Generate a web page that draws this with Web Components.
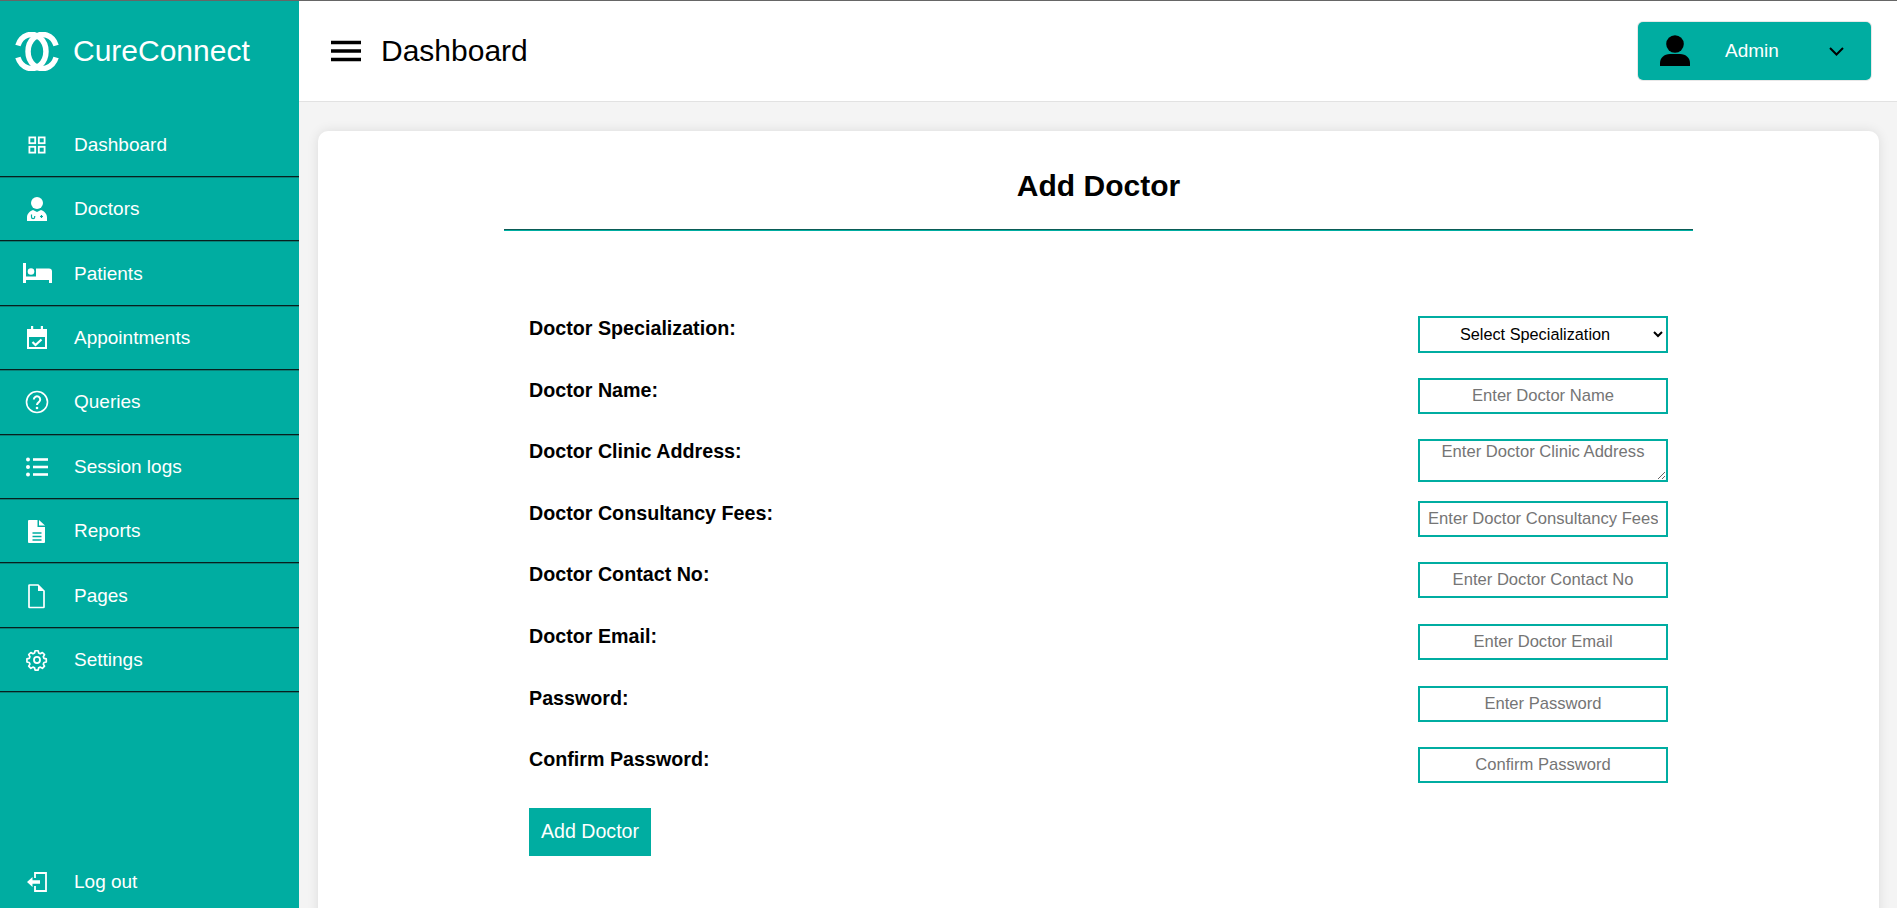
<!DOCTYPE html>
<html>
<head>
<meta charset="utf-8">
<title>CureConnect</title>
<style>
  html, body { margin: 0; height: 100%; }
  body { font-family: "Liberation Sans", Arial, sans-serif; background: #f4f4f4; overflow: hidden; }
</style>
</head>
<body>
<cc-app>
  <cc-sidebar slot="sidebar">
    <cc-nav-item label="Dashboard" icon="grid"></cc-nav-item>
    <cc-nav-item label="Doctors" icon="doctor"></cc-nav-item>
    <cc-nav-item label="Patients" icon="bed"></cc-nav-item>
    <cc-nav-item label="Appointments" icon="calendar"></cc-nav-item>
    <cc-nav-item label="Queries" icon="help"></cc-nav-item>
    <cc-nav-item label="Session logs" icon="list"></cc-nav-item>
    <cc-nav-item label="Reports" icon="report"></cc-nav-item>
    <cc-nav-item label="Pages" icon="page"></cc-nav-item>
    <cc-nav-item label="Settings" icon="gear"></cc-nav-item>
    <cc-nav-item slot="bottom" label="Log out" icon="logout" plain></cc-nav-item>
  </cc-sidebar>
  <cc-topbar slot="topbar" heading="Dashboard" user="Admin"></cc-topbar>
  <cc-card heading="Add Doctor">
    <cc-field label="Doctor Specialization:" kind="select" text="Select Specialization"></cc-field>
    <cc-field label="Doctor Name:" text="Enter Doctor Name"></cc-field>
    <cc-field label="Doctor Clinic Address:" kind="textarea" text="Enter Doctor Clinic Address"></cc-field>
    <cc-field label="Doctor Consultancy Fees:" text="Enter Doctor Consultancy Fees"></cc-field>
    <cc-field label="Doctor Contact No:" text="Enter Doctor Contact No"></cc-field>
    <cc-field label="Doctor Email:" text="Enter Doctor Email"></cc-field>
    <cc-field label="Password:" text="Enter Password"></cc-field>
    <cc-field label="Confirm Password:" text="Confirm Password"></cc-field>
    <button slot="action" style="display:block;width:122px;height:48px;margin:0;padding:0;border:0;background:#00ada1;color:#fff;font:19.6px 'Liberation Sans',Arial,sans-serif">Add Doctor</button>
  </cc-card>
</cc-app>

<script>
const ICONS = {
  grid: '<g fill="none" stroke="currentColor" stroke-width="1.800"><rect x="4.400" y="4.400" width="5.800" height="5.800"/><rect x="13.800" y="4.400" width="5.800" height="5.800"/><rect x="4.400" y="13.800" width="5.800" height="5.800"/><rect x="13.800" y="13.800" width="5.800" height="5.800"/></g>',
  doctor: '<circle cx="12" cy="6" r="6" fill="currentColor"/><path d="M2 24v-3.500c0-4 3-6.500 6-7.500l4 2 4-2c3 1 6 3.500 6 7.500V24z" fill="currentColor"/><path d="M6.500 17.500v2.500a1.600 1.600 0 0 0 3.200 0v-1M16.500 18v3M15 19.500h3" fill="none" stroke="#00ada1" stroke-width="1.200"/>',
  bed: '<path d="M-2 1h3v13.500h10V6.500h13a3 3 0 0 1 3 3V21h-3v-3H1v3h-3z" fill="currentColor"/><circle cx="6" cy="9.500" r="3.300" fill="currentColor"/>',
  calendar: '<path d="M6 0h2.200v3h7.600V0H18v3h4v20H2V3h4z M4 11v10h16V11z" fill="currentColor" fill-rule="evenodd"/><path d="M7.500 16l3 3 6-5.500" fill="none" stroke="currentColor" stroke-width="2.200"/>',
  help: '<circle cx="12" cy="12" r="10.500" fill="none" stroke="currentColor" stroke-width="1.600"/><path d="M8.800 9.500a3.200 3.200 0 1 1 5 2.700c-1.200.8-1.800 1.400-1.800 2.800" fill="none" stroke="currentColor" stroke-width="2"/><circle cx="12" cy="18" r="1.300" fill="currentColor"/>',
  list: '<g fill="currentColor"><circle cx="3" cy="4.500" r="2"/><circle cx="3" cy="12" r="2"/><circle cx="3" cy="19.500" r="2"/><rect x="8" y="3.200" width="15" height="2.600"/><rect x="8" y="10.700" width="15" height="2.600"/><rect x="8" y="18.200" width="15" height="2.600"/></g>',
  report: '<path d="M4 1h8.500v7H20v15a1 1 0 0 1-1 1H4a1 1 0 0 1-1-1V2a1 1 0 0 1 1-1z M14 1l6 5.500h-6z" fill="currentColor"/><path d="M8 14h9M8 17.500h9M8 21h9" stroke="#00ada1" stroke-width="1.300" transform="translate(-.5 0)"/>',
  page: '<path d="M4.500 1h8.500l6 6v16a.5.5 0 0 1-.5.5H4.500a.5.5 0 0 1-.5-.5V1.500a.5.5 0 0 1 .5-.5z" fill="none" stroke="currentColor" stroke-width="1.700"/><path d="M13 1l6 6h-6z" fill="currentColor"/>',
  gear: '<g transform="translate(2.400 2.400) scale(.8)"><path d="M10 1.500h4l.7 3 2.100.9 2.700-1.600 2.800 2.800-1.600 2.700.9 2.100 3 .7v4l-3 .7-.9 2.100 1.600 2.700-2.800 2.800-2.700-1.600-2.100.9-.7 3h-4l-.7-3-2.100-.9-2.700 1.600-2.800-2.800 1.600-2.700-.9-2.100-3-.7v-4l3-.7.9-2.100-1.600-2.700 2.800-2.800 2.700 1.600 2.100-.9z" transform="translate(0 -1) scale(.96)" fill="none" stroke="currentColor" stroke-width="2.200" stroke-linejoin="round"/><circle cx="12" cy="12" r="3.800" fill="none" stroke="currentColor" stroke-width="2.200"/></g>',
  logout: '<path d="M10 8V3h11v18H10v-5" fill="none" stroke="currentColor" stroke-width="1.800"/><path d="M2 12l5.500-5v3.200H15v3.600H7.500V17z" fill="currentColor"/>'
}

class CcApp extends HTMLElement {
  constructor() {
    super()
    this.attachShadow({ mode: 'open' })
    this.shadowRoot.innerHTML = `
      <style>
        :host { display: grid; grid-template-columns: 299px 1fr; grid-template-rows: 101px 1fr; height: 908px; border-top: 1px solid #666; box-sizing: border-box; }
        .side { grid-row: 1 / 3; display: flex; min-height: 0; }
        main { padding: 29px 18px 0 19px; min-height: 0; overflow: hidden; }
      </style>
      <div class="side"><slot name="sidebar"></slot></div>
      <slot name="topbar"></slot>
      <main><slot></slot></main>
    `
  }
}

class CcSidebar extends HTMLElement {
  constructor() {
    super()
    this.attachShadow({ mode: 'open' })
    this.shadowRoot.innerHTML = `
      <style>
        :host { display: flex; flex-direction: column; width: 299px; background: #00ada1; color: #fff; }
        .brand { display: flex; align-items: center; gap: 14px; height: 100px; padding-left: 15px; font-size: 30px; }
        .brand svg { width: 44px; height: 39px; flex: none; }
        nav { display: flex; flex-direction: column; padding-top: 12.600px; }
        .bottom { margin-top: auto; }
      </style>
      <div class="brand">
        <svg viewBox="0 0 44 39" fill="none" stroke="#fff" stroke-width="5.500">
          <path d="M2.900 13.500A14.500 17 0 1 1 2.900 25.500"/>
          <path d="M41.100 13.500A14.500 17 0 1 0 41.100 25.500"/>
        </svg>
        <span>CureConnect</span>
      </div>
      <nav><slot></slot></nav>
      <div class="bottom"><slot name="bottom"></slot></div>
    `
  }
}

class CcNavItem extends HTMLElement {
  constructor() {
    super()
    this.attachShadow({ mode: 'open' })
    const plain = this.hasAttribute('plain')
    this.shadowRoot.innerHTML = `
      <style>
        :host { display: block; }
        a { display: flex; align-items: center; height: ${plain ? 52 : 62.400}px; color: #fff; font-size: 19px; ${plain ? '' : 'border-bottom: 1px solid #0b7f76; box-shadow: inset 0 -1px #06201f; padding-bottom: 1px;'} }
        span.ic { width: 74px; display: flex; justify-content: center; flex: none; }
        svg { width: 24px; height: 24px; overflow: visible; }
      </style>
      <a><span class="ic"><svg viewBox="0 0 24 24">${ICONS[this.getAttribute('icon')]}</svg></span><span>${this.getAttribute('label')}</span></a>
    `
  }
}

class CcTopbar extends HTMLElement {
  constructor() {
    super()
    this.attachShadow({ mode: 'open' })
    this.shadowRoot.innerHTML = `
      <style>
        :host { display: flex; align-items: center; background: #fff; border-bottom: 1px solid #e2e2e2; box-sizing: border-box; padding: 0 26px 0 32px; color: #000; }
        .burger { width: 30px; height: 22px; flex: none; margin-right: 20px; }
        h1 { margin: 0; font-size: 30px; font-weight: 400; }
        .user { margin-left: auto; width: 233px; height: 58px; box-sizing: border-box; background: #00ada1; border-radius: 5px; box-shadow: 0 0 0 1px #e8e8e8; display: flex; align-items: center; padding: 0 27px 0 21px; color: #fff; font-size: 19px; }
        .user span { margin-left: 34px; }
        .user svg.p { width: 32px; height: 32px; }
        .user svg.c { width: 15px; height: 9px; margin-left: auto; }
      </style>
      <svg class="burger" viewBox="0 0 30 22"><path d="M0 2.500h30M0 11h30M0 19.500h30" stroke="#000" stroke-width="3.400"/></svg>
      <h1>${this.getAttribute('heading')}</h1>
      <div class="user">
        <svg class="p" viewBox="0 0 32 32"><circle cx="16" cy="9" r="8.800"/><path d="M1 31v-3c0-5 4-9 10-9h10c6 0 10 4 10 9v3z"/></svg>
        <span>${this.getAttribute('user')}</span>
        <svg class="c" viewBox="0 0 15 9"><path d="M1 1l6.500 6.500L14 1" fill="none" stroke="#000" stroke-width="2"/></svg>
      </div>
    `
  }
}

class CcCard extends HTMLElement {
  constructor() {
    super()
    this.attachShadow({ mode: 'open' })
    this.shadowRoot.innerHTML = `
      <style>
        :host { display: block; height: 900px; background: #fff; border-radius: 10px; box-shadow: 0 0 12px rgba(0,0,0,.1); box-sizing: border-box; padding: 0 186px; color: #000; }
        h2 { margin: 0; height: 100px; box-sizing: border-box; padding-top: 35px; line-height: 40px; text-align: center; font-size: 30px; font-weight: 700; border-bottom: 1px solid #00ada1; box-shadow: inset 0 -1px #0a5c56; }
        .rows { padding: 85px 25px 0; display: flex; flex-direction: column; }
        .act { padding: 0 25px; margin-top: -1px; }
      </style>
      <h2>${this.getAttribute('heading')}</h2>
      <div class="rows"><slot></slot></div>
      <div class="act"><slot name="action"></slot></div>
    `
  }
}

class CcField extends HTMLElement {
  constructor() {
    super()
    this.attachShadow({ mode: 'open' })
    const kind = this.getAttribute('kind')
    const text = this.getAttribute('text')
    let control = `<input type="text" placeholder="${text}">`
    if (kind === 'select') control = `<select><option>${text}</option></select>`
    if (kind === 'textarea') control = `<textarea placeholder="${text}"></textarea>`
    this.shadowRoot.innerHTML = `
      <style>
        :host { display: flex; justify-content: space-between; align-items: flex-start; height: 61.600px; }
        label { font-size: 19.700px; font-weight: 700; line-height: 21px; padding-top: 2px; }
        input, select, textarea { width: 250px; height: 36px; box-sizing: border-box; margin: 0; border: 2px solid #00ada1; border-radius: 0; background: #fff; text-align: center; font: 16.600px "Liberation Sans", Arial, sans-serif; color: #000; padding: 0 8px; outline: 0; display: block; }
        select { height: 37px; font-size: 16.300px; padding: 0 12px 2px 8px; }
        textarea { height: 43px; padding: 1px 8px 0; }
        ::placeholder { color: #757575; opacity: 1; }
      </style>
      <label>${this.getAttribute('label')}</label>
      ${control}
    `
  }
}

customElements.define('cc-app', CcApp)
customElements.define('cc-sidebar', CcSidebar)
customElements.define('cc-nav-item', CcNavItem)
customElements.define('cc-topbar', CcTopbar)
customElements.define('cc-card', CcCard)
customElements.define('cc-field', CcField)
</script>
</body>
</html>
